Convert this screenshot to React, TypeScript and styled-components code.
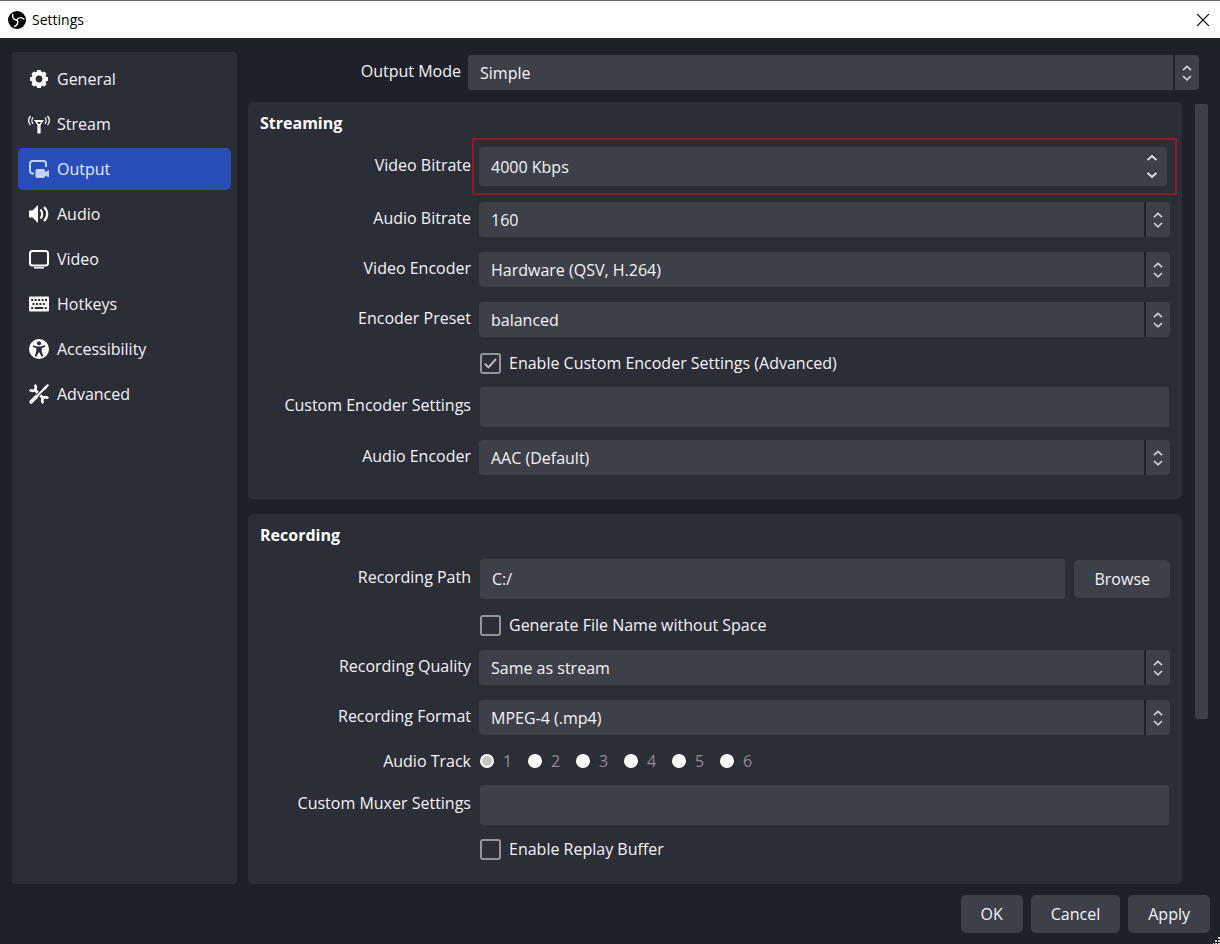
import React from "react";
import styled, { createGlobalStyle, css } from "styled-components";

const color = {
  window: "#1e2129",
  panel: "#2b2d37",
  field: "#3d4049",
  accent: "#284cb8",
  text: "#f4f4f6",
  muted: "#8b8d94",
  outline: "#94959c",
  arrow: "#cfd1d6",
  mark: "#8c1d25",
};

const GlobalStyle = createGlobalStyle`
  * { box-sizing: border-box; }
  body { margin: 0; background: ${color.window}; }
  body, button, input, select {
    font-family: "Open Sans", "Noto Sans", sans-serif;
    font-size: 16px;
    line-height: 24px;
    color: ${color.text};
  }
`;

const Window = styled.div`
  position: relative;
  display: flex;
  flex-direction: column;
  height: 100vh;
  min-width: 800px;
  background: ${color.window};
`;

const TitleBar = styled.header`
  display: flex;
  align-items: center;
  gap: 6px;
  height: 38px;
  flex: none;
  padding: 0 8px;
  border-top: 1px solid #6e6e6e;
  background: #fff;
  color: #000;
`;

const WindowTitle = styled.h1`
  flex: 1;
  margin: 0;
  font-size: 14px;
  font-weight: 400;
  line-height: 20px;
`;

const CloseButton = styled.button`
  display: grid;
  place-items: center;
  width: 18px;
  height: 18px;
  padding: 0;
  border: 0;
  background: none;
`;

const Body = styled.div`
  display: flex;
  flex: 1;
  min-height: 0;
  gap: 11px;
  padding: 14px 12px 0;
`;

const Sidebar = styled.nav`
  display: flex;
  flex-direction: column;
  gap: 3px;
  width: 225px;
  flex: none;
  padding: 6px;
  border-radius: 4px;
  background: ${color.panel};
`;

const NavItem = styled.a<{ $active?: boolean }>`
  display: flex;
  align-items: center;
  gap: 7px;
  height: 42px;
  padding: 0 10px;
  border-radius: 5px;
  color: ${(p) => (p.$active ? "#e3ebff" : color.text)};
  background: ${(p) => (p.$active ? color.accent : "transparent")};
  text-decoration: none;

  svg {
    flex: none;
    color: ${(p) => (p.$active ? "#bcd4ff" : "#fff")};
  }
`;

const Main = styled.main`
  display: flex;
  flex: 1;
  flex-direction: column;
  min-width: 0;
`;

const ModeRow = styled.div`
  display: grid;
  grid-template-columns: 213px 1fr;
  gap: 7px;
  align-items: center;
  height: 50px;
  padding: 0 9px 8px 0;
`;

const ScrollArea = styled.div`
  display: flex;
  flex: 1;
  min-height: 0;
  gap: 13px;
`;

const Groups = styled.div`
  display: flex;
  flex: 1;
  flex-direction: column;
  gap: 15px;
  min-width: 0;
  overflow: hidden;
`;

const ScrollTrack = styled.div`
  width: 13px;
  padding: 2px 0;
`;

const ScrollThumb = styled.div`
  height: 79%;
  border-radius: 2px;
  background: ${color.field};
`;

const Group = styled.section<{ $fill?: boolean }>`
  flex: ${(p) => (p.$fill ? "1 0 auto" : "none")};
  padding: 9px 12px 16px;
  border-radius: 5px;
  background: ${color.panel};
`;

const GroupTitle = styled.h2`
  margin: 0 0 3px;
  font-size: 16px;
  font-weight: 700;
  line-height: 24px;
  color: #fff;
`;

const rowHeight = { tall: 57, field: 52, select: 50, check: 36 };

const Row = styled.div<{ $kind: keyof typeof rowHeight }>`
  position: relative;
  display: grid;
  grid-template-columns: 211px 1fr;
  gap: 8px;
  align-items: center;
  height: ${(p) => rowHeight[p.$kind]}px;
`;

const Highlight = styled.div`
  position: absolute;
  inset: 0 -7px 0 212px;
  border: 2px solid ${color.mark};
  pointer-events: none;
`;

const FieldLabel = styled.label<{ $level?: boolean }>`
  padding-bottom: ${(p) => (p.$level ? 0 : 4)}px;
  text-align: right;
  white-space: nowrap;
`;

const fieldBase = css`
  width: 100%;
  border: 0;
  border-radius: 4px;
  outline: 0;
  background: ${color.field};
`;

const TextField = styled.input`
  ${fieldBase}
  height: 40px;
  padding: 0 12px;
  border-radius: 3px;
`;

const FieldSlot = styled.div`
  display: flex;
  align-items: center;
  gap: 9px;
  padding-left: 1px;
`;

const FullSlot = styled(FieldSlot)`
  padding-right: 1px;
`;

const SpinShell = styled.div`
  ${fieldBase}
  display: flex;
  align-items: center;
  width: auto;
  height: 39px;
  margin-right: 3px;
  padding-right: 7px;
`;

const SpinInput = styled.input`
  flex: 1;
  min-width: 0;
  padding: 0 12px;
  border: 0;
  outline: 0;
  background: none;
`;

const SpinButtons = styled.div`
  display: flex;
  flex-direction: column;
`;

const SpinButton = styled.button`
  display: grid;
  place-items: center;
  width: 16px;
  height: 17px;
  padding: 0;
  border: 0;
  background: none;
  color: #e6e7ea;
`;

const SelectShell = styled.div`
  position: relative;
  height: 35px;
  margin-bottom: 1px;
`;

const SelectInput = styled.select`
  ${fieldBase}
  height: 35px;
  padding: 0 38px 0 12px;
  appearance: none;
`;

const SelectArrows = styled.span`
  position: absolute;
  top: 0;
  right: 0;
  bottom: 0;
  display: grid;
  place-items: center;
  width: 26px;
  border-left: 2px solid ${color.window};
  color: ${color.arrow};
  pointer-events: none;
`;

const CheckLabel = styled.label`
  display: flex;
  align-items: center;
  gap: 8px;
  grid-column: 2;
  padding-left: 1px;
`;

const CheckMark = styled.span`
  display: grid;

  > * {
    grid-area: 1 / 1;
    place-self: center;
  }
  svg {
    color: #b9bac0;
    pointer-events: none;
  }
  input:not(:checked) + svg {
    display: none;
  }
`;

const CheckInput = styled.input`
  width: 21px;
  height: 21px;
  margin: 0;
  border: 2px solid ${color.outline};
  border-radius: 3px;
  appearance: none;
`;

const Tracks = styled.div`
  display: flex;
`;

const TrackLabel = styled.label`
  display: flex;
  align-items: center;
  gap: 9px;
  width: 48px;
  padding-left: 1px;
  color: ${color.muted};
`;

const TrackInput = styled.input`
  width: 14px;
  height: 14px;
  margin: 0;
  border: 2px solid #fff;
  border-radius: 50%;
  background: #fff;
  appearance: none;

  &:checked {
    background: #c4c4c4;
  }
`;

const Button = styled.button`
  flex: none;
  height: 38px;
  padding: 0 20px;
  border: 0;
  border-radius: 5px;
  background: ${color.field};
`;

const Footer = styled.footer`
  display: flex;
  flex: none;
  justify-content: flex-end;
  gap: 8px;
  padding: 11px 10px;
`;

const Grip = styled.svg`
  position: absolute;
  right: 0;
  bottom: 0;
`;

const ArrowPair = () => (
  <svg width="10" height="18" viewBox="0 0 10 18" fill="none" stroke="currentColor" strokeWidth="1.7" aria-hidden>
    <path d="M1 6.2 5 2.4l4 3.8M1 12l4 3.8L9 12" />
  </svg>
);

const Chevron = ({ up }: { up?: boolean }) => (
  <svg width="12" height="8" viewBox="0 0 12 8" fill="none" stroke="currentColor" strokeWidth="1.8" aria-hidden>
    <path d={up ? "M1.5 6.2 6 2l4.5 4.2" : "M1.5 1.8 6 6l4.5-4.2"} />
  </svg>
);

const AppLogo = () => (
  <svg width="18" height="18" viewBox="0 0 18 18" aria-hidden>
    <circle cx="9" cy="9" r="9" fill="#000" />
    <g fill="none" stroke="#fff" strokeWidth="1.4" strokeLinecap="round">
      {[0, 120, 240].map((turn) => (
        <path key={turn} d="M4.700 3.500C4.200 6.500 5.600 9 9 9.300" transform={`rotate(${turn} 9 9)`} />
      ))}
    </g>
  </svg>
);

const icon = { width: 22, height: 22, viewBox: "0 0 22 22", "aria-hidden": true } as const;

const GearIcon = () => (
  <svg {...icon}>
    <circle cx="11" cy="11" r="5.400" fill="none" stroke="currentColor" strokeWidth="4" />
    {[0, 45, 90, 135, 180, 225, 270, 315].map((turn) => (
      <rect key={turn} x="8.800" y="2" width="4.400" height="4" rx="1.300" fill="currentColor" transform={`rotate(${turn} 11 11)`} />
    ))}
  </svg>
);

const StreamIcon = () => (
  <svg {...icon} fill="none" stroke="currentColor">
    <path d="M6 7h10l-3.400 5v8.500H9.400V12z" fill="currentColor" stroke="none" />
    <path d="M9 8.900h4L11 11.500z" fill={color.panel} stroke="none" />
    <path d="M5 4.500c-1.400 1.700-1.400 4.600 0 6.300M2.500 3c-2.200 2.700-2.200 6.500 0 9.200M17 4.500c1.400 1.700 1.400 4.600 0 6.300M19.500 3c2.200 2.700 2.200 6.500 0 9.200" strokeWidth="1.3" />
  </svg>
);

const OutputIcon = () => (
  <svg {...icon}>
    <path d="M6 15.500H4.500a2.500 2.500 0 0 1-2.500-2.500V5.500A2.500 2.500 0 0 1 4.500 3h11A2.500 2.500 0 0 1 18 5.500V9" fill="none" stroke="currentColor" strokeWidth="2" />
    <path d="M9 11h6.500a1.500 1.500 0 0 1 1.500 1.500v1.500l4-2v7.500l-4-2v1a1.500 1.500 0 0 1-1.500 1.500H9a1.500 1.500 0 0 1-1.500-1.500v-6A1.500 1.500 0 0 1 9 11z" fill="currentColor" />
  </svg>
);

const AudioIcon = () => (
  <svg {...icon}>
    <path d="M1 7.500h3.500L10 2v18l-5.500-5.500H1z" fill="currentColor" />
    <path d="M12.500 6.500c2.300 2.500 2.300 6.500 0 9M16 4c4.200 3.800 4.200 10.200 0 14" fill="none" stroke="currentColor" strokeWidth="2.200" />
  </svg>
);

const VideoIcon = () => (
  <svg {...icon}>
    <rect x="2" y="3" width="18" height="14.500" rx="2.500" fill="none" stroke="currentColor" strokeWidth="2" />
    <path d="M6 19.800h10" stroke="currentColor" strokeWidth="1.500" />
  </svg>
);

const KeyboardIcon = () => (
  <svg {...icon}>
    <rect x="1" y="3.500" width="20" height="15" rx="1" fill="currentColor" />
    <g fill="none" stroke={color.panel} strokeWidth="2">
      <path d="M3.200 7h16" strokeDasharray="2 1.450" />
      <path d="M4.500 11h14" strokeDasharray="2 1.450" />
      <path d="M3.200 15h2m1.500 0h8.600m1.500 0h2" />
    </g>
  </svg>
);

const AccessIcon = () => (
  <svg {...icon}>
    <circle cx="11" cy="11" r="10" fill="currentColor" />
    <circle cx="11" cy="5.300" r="2.100" fill={color.panel} />
    <path d="M5 7.300l4.300 1.100h3.400L17 7.300l.3 1.500-3.600 1.400v3l1.500 5-1.600.5L11.400 14.500h-.8L8.400 18.700l-1.600-.5 1.500-5v-3L4.700 8.800z" fill={color.panel} />
  </svg>
);

const jaw = "M6.700 1.900A3.400 3.400 0 1 1 1.900 6.700";

const ToolsIcon = () => (
  <svg {...icon} fill="none" stroke="currentColor">
    <path d={jaw} strokeWidth="2.600" />
    <path d={jaw} strokeWidth="2.600" transform="rotate(180 11 11)" />
    <path d="M7 7l8 8" strokeWidth="3" />
    <path d="M8 14l9-9" stroke={color.panel} strokeWidth="3.600" />
    <path d="M3 19l5.500-5.500" strokeWidth="3.600" strokeLinecap="round" />
    <path d="M8.500 13.500 17 5" strokeWidth="1.800" />
    <path d="M15.500 4.500 19.800 1 21 2.200l-3.500 4.300-1.700.3z" fill="currentColor" stroke="none" />
  </svg>
);

const navItems = [
  { name: "General", Icon: GearIcon },
  { name: "Stream", Icon: StreamIcon },
  { name: "Output", Icon: OutputIcon },
  { name: "Audio", Icon: AudioIcon },
  { name: "Video", Icon: VideoIcon },
  { name: "Hotkeys", Icon: KeyboardIcon },
  { name: "Accessibility", Icon: AccessIcon },
  { name: "Advanced", Icon: ToolsIcon },
];

const Dropdown = ({ id, value }: { id: string; value: string }) => (
  <SelectShell>
    <SelectInput id={id} defaultValue={value}>
      <option>{value}</option>
    </SelectInput>
    <SelectArrows>
      <ArrowPair />
    </SelectArrows>
  </SelectShell>
);

const SelectRow = ({ id, label, value }: { id: string; label: string; value: string }) => (
  <Row $kind="select">
    <FieldLabel htmlFor={id}>{label}</FieldLabel>
    <Dropdown id={id} value={value} />
  </Row>
);

const TextRow = ({ id, label }: { id: string; label: string }) => (
  <Row $kind="field">
    <FieldLabel htmlFor={id}>{label}</FieldLabel>
    <FullSlot>
      <TextField id={id} type="text" />
    </FullSlot>
  </Row>
);

const CheckRow = ({ label, checked }: { label: string; checked?: boolean }) => (
  <Row $kind="check">
    <CheckLabel>
      <CheckMark>
        <CheckInput type="checkbox" defaultChecked={checked} />
        <svg width="15" height="15" viewBox="0 0 15 15" fill="none" stroke="currentColor" strokeWidth="2" aria-hidden>
          <path d="M1.800 7.800 5.500 11.300 13 3" />
        </svg>
      </CheckMark>
      {label}
    </CheckLabel>
  </Row>
);

export default function App() {
  return (
    <>
      <GlobalStyle />
      <Window>
        <TitleBar>
          <AppLogo />
          <WindowTitle>Settings</WindowTitle>
          <CloseButton type="button" aria-label="Close">
            <svg width="12" height="12" viewBox="0 0 12 12" stroke="#000" strokeWidth="1.200" aria-hidden>
              <path d="M0 0l12 12M12 0L0 12" />
            </svg>
          </CloseButton>
        </TitleBar>
        <Body>
          <Sidebar>
            {navItems.map(({ name, Icon }) => (
              <NavItem key={name} href={`#${name.toLowerCase()}`} $active={name === "Output"}>
                <Icon />
                {name}
              </NavItem>
            ))}
          </Sidebar>
          <Main>
            <ModeRow>
              <FieldLabel htmlFor="mode">Output Mode</FieldLabel>
              <Dropdown id="mode" value="Simple" />
            </ModeRow>
            <ScrollArea>
              <Groups>
                <Group>
                  <GroupTitle>Streaming</GroupTitle>
                  <Row $kind="tall">
                    <FieldLabel htmlFor="video-bitrate">Video Bitrate</FieldLabel>
                    <SpinShell>
                      <SpinInput id="video-bitrate" type="text" defaultValue="4000 Kbps" />
                      <SpinButtons>
                        <SpinButton type="button" aria-label="Increase">
                          <Chevron up />
                        </SpinButton>
                        <SpinButton type="button" aria-label="Decrease">
                          <Chevron />
                        </SpinButton>
                      </SpinButtons>
                    </SpinShell>
                    <Highlight />
                  </Row>
                  <SelectRow id="audio-bitrate" label="Audio Bitrate" value="160" />
                  <SelectRow id="video-encoder" label="Video Encoder" value="Hardware (QSV, H.264)" />
                  <SelectRow id="preset" label="Encoder Preset" value="balanced" />
                  <CheckRow label="Enable Custom Encoder Settings (Advanced)" checked />
                  <TextRow id="custom-encoder" label="Custom Encoder Settings" />
                  <SelectRow id="audio-encoder" label="Audio Encoder" value="AAC (Default)" />
                </Group>
                <Group $fill>
                  <GroupTitle>Recording</GroupTitle>
                  <Row $kind="tall">
                    <FieldLabel htmlFor="path">Recording Path</FieldLabel>
                    <FieldSlot>
                      <TextField id="path" type="text" defaultValue="C:/" />
                      <Button type="button">Browse</Button>
                    </FieldSlot>
                  </Row>
                  <CheckRow label="Generate File Name without Space" />
                  <SelectRow id="quality" label="Recording Quality" value="Same as stream" />
                  <SelectRow id="format" label="Recording Format" value="MPEG-4 (.mp4)" />
                  <Row $kind="check">
                    <FieldLabel as="span" $level id="tracks">
                      Audio Track
                    </FieldLabel>
                    <Tracks role="radiogroup" aria-labelledby="tracks">
                      {[1, 2, 3, 4, 5, 6].map((n) => (
                        <TrackLabel key={n}>
                          <TrackInput type="radio" name="track" defaultChecked={n === 1} />
                          {n}
                        </TrackLabel>
                      ))}
                    </Tracks>
                  </Row>
                  <TextRow id="muxer" label="Custom Muxer Settings" />
                  <CheckRow label="Enable Replay Buffer" />
                </Group>
              </Groups>
              <ScrollTrack>
                <ScrollThumb />
              </ScrollTrack>
            </ScrollArea>
          </Main>
        </Body>
        <Footer>
          <Button type="button">OK</Button>
          <Button type="button">Cancel</Button>
          <Button type="button">Apply</Button>
        </Footer>
        <Grip width="7" height="7" viewBox="0 0 7 7" fill="#c8c8c8" aria-hidden>
          <path d="M5 0h2v2H5zM2 3h2v2H2zM5 3h2v2H5zM0 6h1v1H0zM2 6h2v1H2zM5 6h2v1H5z" />
        </Grip>
      </Window>
    </>
  );
}
